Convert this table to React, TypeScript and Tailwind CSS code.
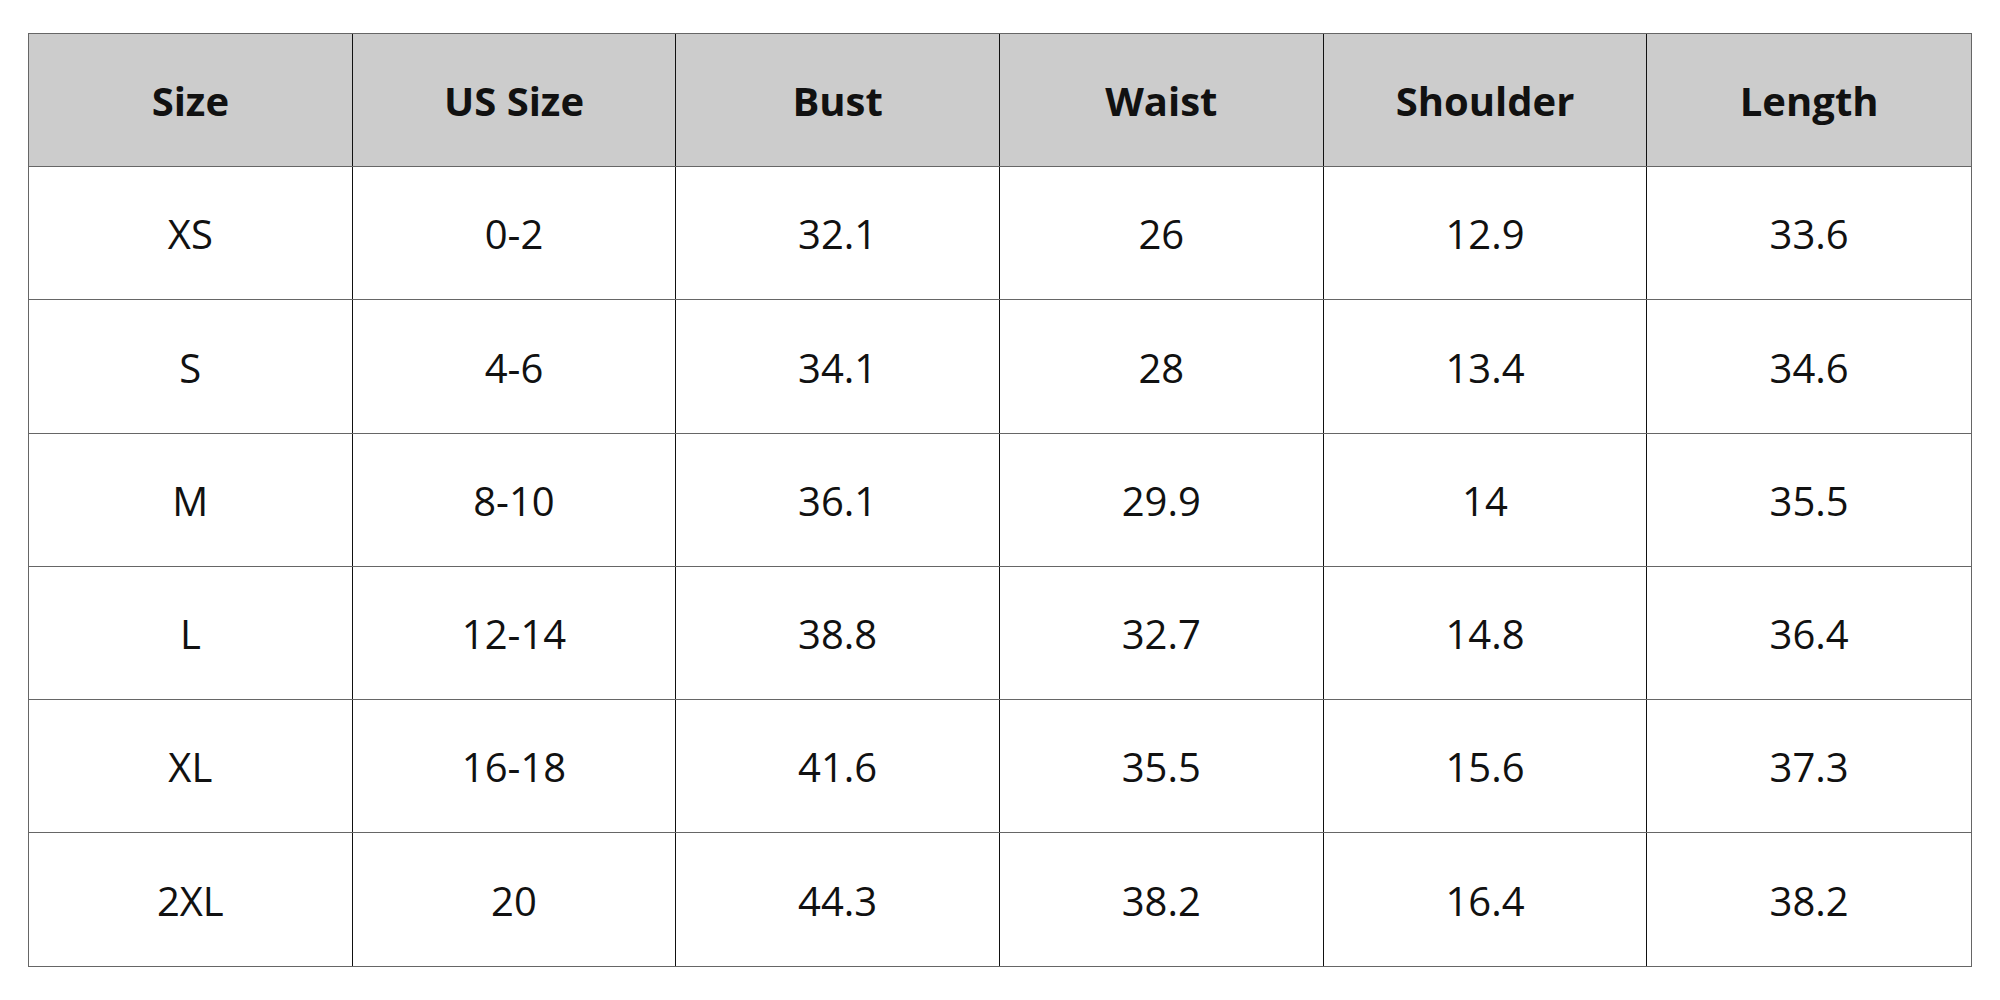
const headers = ['Size', 'US Size', 'Bust', 'Waist', 'Shoulder', 'Length'];

const rows = [
  ['XS', '0-2', '32.1', '26', '12.9', '33.6'],
  ['S', '4-6', '34.1', '28', '13.4', '34.6'],
  ['M', '8-10', '36.1', '29.9', '14', '35.5'],
  ['L', '12-14', '38.8', '32.7', '14.8', '36.4'],
  ['XL', '16-18', '41.6', '35.5', '15.6', '37.3'],
  ['2XL', '20', '44.3', '38.2', '16.4', '38.2'],
];

export default function App() {
  return (
    <div className="min-h-screen w-full bg-white pl-[28px] pt-[33px] font-['Open_Sans',sans-serif] text-[#111]">
      <div className="w-[1944px] border-[1.5px] border-[#666]">
        <div className="grid h-[133.3px] grid-cols-6 border-b-[1.5px] border-[#666] bg-[#cccccc]">
          {headers.map((h, i) => (
            <div
              key={h}
              className={`flex items-center justify-center pt-[2px] text-[40px] font-bold ${
                i < headers.length - 1 ? 'border-r border-[#111]' : ''
              }`}
            >
              {h}
            </div>
          ))}
        </div>
        {rows.map((row, r) => (
          <div
            key={row[0]}
            className={`grid h-[133.2px] grid-cols-6 ${
              r < rows.length - 1 ? 'border-b-[1.5px] border-[#666]' : ''
            }`}
          >
            {row.map((cell, i) => (
              <div
                key={i}
                className={`flex items-center justify-center pt-[2px] text-[40px] font-normal ${
                  i < row.length - 1 ? 'border-r border-[#111]' : ''
                }`}
              >
                {cell}
              </div>
            ))}
          </div>
        ))}
      </div>
    </div>
  );
}
